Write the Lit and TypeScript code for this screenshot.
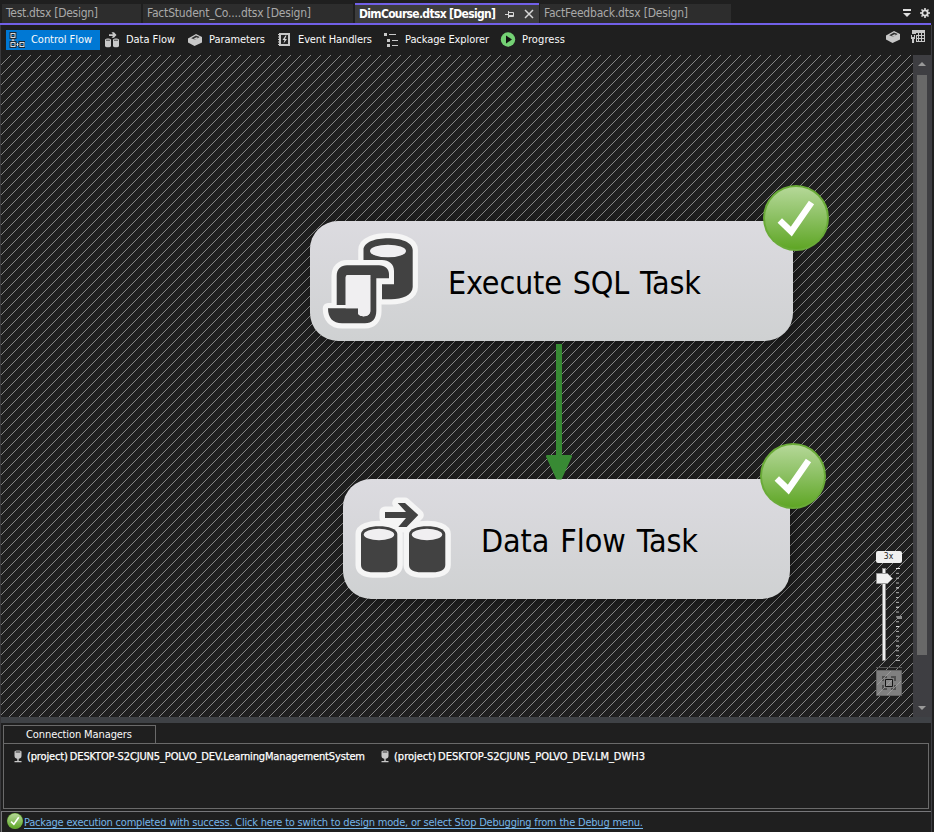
import { LitElement, html, css, svg } from "lit";
import { customElement, property, query } from "lit/decorators.js";

/** One line of text whose tracking is adjusted so that it spans a set width. */
@customElement("fit-text")
class FitText extends LitElement {
  @property({ type: Number }) width = 0;
  @property() text = "";
  @query("span") span!: HTMLSpanElement;

  static styles = css`
    :host { display: inline-block; white-space: pre; flex: none; }
  `;

  protected updated() {
    this.span.style.letterSpacing = "0px";
    const natural = this.span.getBoundingClientRect().width;
    const spacing = (this.width - natural) / Math.max(1, this.text.length - 1);
    this.span.style.letterSpacing = `${spacing}px`;
    this.style.width = `${this.width}px`;
  }

  render() {
    return html`<span>${this.text}</span>`;
  }
}

const box = svg`<path d="M1 6.500 9 2l6 3v5.500L7.500 14 1 10.500z" fill="#c8c8c8"/><path d="M4.200 6.300 8.900 3.500l3.800 1.600-4.500 2.600z" fill="#303030"/><path d="M6.400 6.900l2.900-1.700 2 .7-3 1.800z" fill="#c8c8c8"/>`;

const toolIcons: Record<string, unknown> = {
  control: svg`<g fill="none" stroke="#1c2a36" stroke-width="3"><rect x="2" y="1.500" width="4" height="4"/><rect x="2" y="10.500" width="4" height="4"/><rect x="11" y="10.500" width="4" height="4"/><path d="M4 6.500V9M7 12.500h3"/></g><g fill="none" stroke="#d6dde2"><rect x="2" y="1.500" width="4" height="4"/><rect x="2" y="10.500" width="4" height="4"/><rect x="11" y="10.500" width="4" height="4"/><path d="M4 7v2M2.500 8.200h3M7.500 12.500h2M8.500 11v3"/></g>`,
  data: svg`<g fill="#c8c8c8"><path d="M1 8c0-2 6-2 6 0v6c0 1.800-6 1.800-6 0z"/><path d="M9 8c0-2 6-2 6 0v6c0 1.800-6 1.800-6 0z"/><path d="M5 2.200h4L7.500.3H10L12.500 3 10 5.800H7.500L9 4H5z"/></g><path d="M2 8.200h4M10 8.200h4" stroke="#444"/>`,
  params: box,
  events: svg`<path d="M3 1h11v13H3z" fill="#c8c8c8"/><path d="M5 3h7v9H5z" fill="#252525"/><path d="M2 2.500h2M2 5h2M2 7.500h2M2 10h2M2 12.500h2" stroke="#c8c8c8"/><path d="M9.500 3.500 6.500 8h2l-1 3.500L11 7H9l1.500-3.500z" fill="#d8d8d8"/>`,
  explorer: svg`<g fill="#c8c8c8"><path d="M1 1h3v3H1zM4 7h3v3H4zM4 12h3v3H4zM6 2h7v1H6zM9 8h6v1H9zM9 13h6v1H9z"/></g>`,
  progress: svg`<circle cx="8" cy="7.500" r="7.200" fill="#74d174"/><path d="M6 3.500 12 7.500l-6 4z" fill="#111"/>`,
};

const tools = [
  { icon: "control", label: "Control Flow", width: 94, text: 61, active: true },
  { icon: "data", label: "Data Flow", width: 82, text: 49 },
  { icon: "params", label: "Parameters", width: 88, text: 56 },
  { icon: "events", label: "Event Handlers", width: 106, text: 74 },
  { icon: "explorer", label: "Package Explorer", width: 116, text: 84 },
  { icon: "progress", label: "Progress", width: 80, text: 43 },
];

const badge = html`<svg class="badge" viewBox="0 0 66 66">
  <defs><linearGradient id="g" x2="0" y2="1"><stop offset="0" stop-color="#b5d898"/><stop offset=".45" stop-color="#8fc267"/><stop offset="1" stop-color="#5fa625"/></linearGradient></defs>
  <circle cx="33" cy="33" r="33" fill="#6aab38"/><circle cx="33" cy="33" r="31" fill="url(#g)"/>
  <path d="M16.800 35.500 28.300 46.500 48.500 17.500" fill="none" stroke="#fff" stroke-width="6.400"/>
</svg>`;

const sqlShape = "M41.500 27V17C41.500 9 54 5.300 66 5.300S90.700 9 90.700 17V54C90.700 62 80 66.300 69 66.300H60V51.300H72V38C72 31 67 27 60 27Z";
const scrollShape = "M14.700 72V43C14.700 36 19 32.300 25 32.300H57C63 32.300 67 36 67 41V45.300H54.300V78C54.300 86 50 90.300 43 90.300H20C11 90.300 6 85 6 75.300H14.700Z";
const sqlIcon = html`<svg class="art" viewBox="0 0 96 96">
  <g fill="#f5f5f5" stroke="#f5f5f5" stroke-width="10.500" stroke-linejoin="round"><path d=${sqlShape}/><path d=${scrollShape}/></g>
  <path d=${sqlShape} fill="#424242"/><ellipse cx="66" cy="18" rx="18" ry="6.300" fill="#f0eff1"/>
  <path d="M6 75.300H36V80C36 84.500 48.300 84.500 48.300 78V45H54.300V78C54.300 86 50 90.300 43 90.300H20C11 90.300 6 85 6 75.300Z" fill="#424242"/>
  <path d="M14.700 72V43C14.700 36 19 32.300 25 32.300H57C63 32.300 67 36 67 41V45.300H48.300V42H26C24 42 23.700 43 23.700 45V72Z" fill="#424242"/>
  <path d="M23.700 45C23.700 43 24.500 42 26 42H48.300V78C48.300 85 36 85 36 79V75.300H23.700Z" fill="#f0eff1"/>
</svg>`;

const cylL = "M6 39C6 28.500 42.300 28.500 42.300 39V70C42.300 75 37 77.300 30 77.300H18C11 77.300 6 75 6 70Z";
const cylR = "M54 39C54 28.500 90.300 28.500 90.300 39V70C90.300 75 85 77.300 78 77.300H66C59 77.300 54 75 54 70Z";
const arrowShape = "M30 17H51L42.700 8H50L63.300 20 51.700 32H43.300L51 23H30Z";
const dataIcon = html`<svg class="art" viewBox="0 0 96 96">
  <g fill="#f5f5f5" stroke="#f5f5f5" stroke-width="11" stroke-linejoin="round"><path d=${cylL}/><path d=${cylR}/><path d=${arrowShape}/></g>
  <g fill="#424242"><path d=${cylL}/><path d=${cylR}/><path d=${arrowShape}/></g>
  <g fill="#f0eff1"><ellipse cx="24" cy="39.500" rx="15.200" ry="5.700"/><ellipse cx="72" cy="39.500" rx="15.200" ry="5.700"/></g>
</svg>`;

const plug = html`<svg class="plug" viewBox="0 0 8 13"><path d="M.5 1.500C.5 0 7.500 0 7.500 1.500V6C7.500 8 6 8.500 4.700 8.700V11H7.500v1.200H.5V11h2.800V8.700C2 8.500.5 8 .5 6z" fill="#c8c8c8"/><path d="M1.700 2h4.600" stroke="#333"/></svg>`;

const diagonal = Array.from({ length: 10 }, (_, i) => `M${(15 - i) % 10} ${i}h1v1h-1z`).join("");
const ticks = Array.from({ length: 20 }, (_, i) => i);

@customElement("app-root")
class AppRoot extends LitElement {
  static styles = css`
    :host {
      display: flex; flex-direction: column; box-sizing: border-box;
      width: 934px; height: 832px; overflow: hidden; position: relative;
      background: #1f1f1f; color: #fafafa;
      font: 11px/14px "DejaVu Sans Condensed", "DejaVu Sans", sans-serif;
      font-stretch: condensed;
    }
    svg { display: block; flex: none; }
    .tabs { display: flex; height: 23px; padding-left: 2px; align-items: flex-end; flex: none; font-size: 12px; border-bottom: 2px solid #7160e8; margin-right: 3px; box-sizing: content-box; }
    .tab { box-sizing: border-box; display: flex; align-items: center; height: 19px; padding: 0 0 1px 4px; background: #2d2d2d; color: #a9a9a9; margin-right: 2px; }
    .t1 { width: 139px; } .t2 { width: 210px; }
    .t3 { width: 184px; height: 20px; background: #3d3d3d; border-top: 2px solid #7160e8; color: #fff; font-weight: bold; margin-right: 1px; padding-bottom: 0; }
    .t4 { width: 191px; }
    .pin { margin-left: 9px; } .close { margin-left: 10px; }
    .tabtools { display: flex; gap: 9px; margin-left: auto; height: 20px; align-items: center; margin-right: 1px; }
    .body { flex: none; height: 807px; display: flex; flex-direction: column; border-left: 1px solid #38383b; border-right: 1px solid #3d3d42; margin-right: 2px; }
    .toolbar { display: flex; height: 30px; flex: none; padding-left: 5px; align-items: flex-start; box-sizing: border-box; padding-top: 5px; }
    .tool { display: flex; box-sizing: border-box; height: 20px; align-items: center; padding-left: 3px; gap: 6px; margin-right: 1px; }
    .tool svg { margin-top: -1px; }
    .active { background: #0078d4; }
    .side { display: flex; gap: 8px; margin-left: auto; margin-right: 6px; margin-top: -1px; }
    .stage { display: flex; height: 662px; flex: none; }
    .canvas { position: relative; width: 912px; height: 662px; overflow: hidden; }
    .hatch { position: absolute; inset: 0; }
    .node { position: absolute; box-sizing: border-box; height: 120px; border-radius: 28px; background: linear-gradient(#dcdbe0, #cfd1d2); color: #000; display: flex; align-items: center; gap: 30px; padding-left: 12px; font-size: 32px; line-height: 40px; word-spacing: 2px; box-shadow: 3px 2px 12px #0005; }
    .n1 { left: 309px; top: 166px; width: 483px; }
    .n2 { left: 342px; top: 424px; width: 447px; }
    .n2 .art { margin-top: 8px; }
    .node fit-text { margin-top: 3px; }
    .art { width: 96px; height: 96px; }
    .badge { position: absolute; right: -36px; top: -36px; width: 66px; height: 66px; }
    .arrow { position: absolute; left: 545px; top: 289px; }
    .zoom { position: absolute; left: 875px; top: 496px; width: 26px; display: flex; flex-direction: column; }
    .level { height: 12px; border-radius: 2px; background: #f0f0f0; color: #222; font-size: 8.5px; line-height: 11px; text-align: center; padding-right: 1px; box-sizing: border-box; }
    .scroll { width: 18px; background: #3e3e42; display: flex; flex-direction: column; align-items: center; box-sizing: border-box; padding-top: 7px; }
    .thumb { width: 10px; height: 580px; margin: 9px 0 51px; background: #686868; flex: none; }
    .splitter { height: 6px; background: #3f4246; flex: none; }
    .cm { margin: 2px 2px 0 2px; height: 84px; flex: none; }
    .cmtab { width: 153px; height: 18px; box-sizing: border-box; border: 1px solid #6a6a6a; border-bottom: 0; padding: 2px 0 0 22px; }
    .cmbody { height: 66px; box-sizing: border-box; border: 1px solid #6a6a6a; display: flex; padding: 6px 0 0 10px; align-items: flex-start; color: #fff; -webkit-text-stroke: .25px #fff; word-spacing: -1px; }
    .conn { display: flex; align-items: center; gap: 5px; margin-right: 16px; height: 13px; }
    .plug { width: 8px; height: 13px; }
    .status { margin-top: 2px; border-top: 1px solid #77777a; border-left: 1px solid #77777a; height: 20px; display: flex; align-items: center; padding-left: 5px; gap: 1px; color: #75b5e8; }
    .link { border-bottom: 1px solid #75b5e8; height: 12px; line-height: 14px; }
    .status .badge { position: static; width: 16px; height: 16px; margin-top: -2px; }
  `;

  render() {
    return html`
      <div class="tabs">
        <div class="tab t1"><fit-text width="92" text="Test.dtsx [Design]"></fit-text></div>
        <div class="tab t2"><fit-text width="164" text="FactStudent_Co....dtsx [Design]"></fit-text></div>
        <div class="tab t3"><fit-text width="137" text="DimCourse.dtsx [Design]"></fit-text>
          <svg class="pin" width="9" height="9" fill="none" stroke="#d6d6d6"><path d="M0 4.500h3M3.500 1v7M4 2.500h4.500v4H4M4 5.500h4.500"/></svg>
          <svg class="close" width="10" height="10" stroke="#d6d6d6" stroke-width="1.500"><path d="M1 1l8 8M9 1L1 9"/></svg>
        </div>
        <div class="tab t4"><fit-text width="144" text="FactFeedback.dtsx [Design]"></fit-text></div>
        <div class="tabtools">
          <svg width="8" height="8" fill="#dedede"><path d="M0 0h8v2H0zM0 4h8L4 8z"/></svg>
          <svg width="10" height="10" viewBox="0 0 10 10"><circle cx="5" cy="5" r="2.700" fill="none" stroke="#dedede" stroke-width="1.800"/><path d="M5 0v2M5 8v2M0 5h2M8 5h2M1.500 1.500l1.300 1.300M7.200 7.200l1.300 1.300M1.500 8.500l1.300-1.300M7.200 2.800l1.300-1.300" stroke="#dedede" stroke-width="1.600"/></svg>
        </div>
      </div>
      <div class="body">
        <div class="toolbar">
          ${tools.map(t => html`<div class="tool ${t.active ? "active" : ""}" style="width:${t.width}px">
            <svg width="16" height="16" viewBox="0 0 16 16">${toolIcons[t.icon]}</svg>
            <fit-text .width=${t.text} .text=${t.label}></fit-text></div>`)}
          <div class="side">
            <svg width="16" height="16" viewBox="0 0 16 16">${box}</svg>
            <svg width="16" height="16" viewBox="0 0 16 16" shape-rendering="crispEdges"><path d="M3 1h13v12H7V8H3z" fill="#c8c8c8"/><path d="M7 4h2v2H7zM10 4h2v2h-2zM13 4h2v2h-2zM8 7h1v2H8zM10 7h2v2h-2zM13 7h2v2h-2zM8 10h1v2H8zM10 10h2v2h-2zM13 10h2v2h-2z" fill="#252525"/><path d="M1 5h6v4H6v5H3V9H1z" fill="#252525"/><path d="M2 6h1v3H2zM5 6h1v3H5zM2 8h4v2H2zM3 10h2v4H3z" fill="#c8c8c8"/></svg>
          </div>
        </div>
        <div class="stage">
          <div class="canvas">
            <svg class="hatch" width="912" height="662" shape-rendering="crispEdges">
              <defs><pattern id="h" x="-1" y="-55" width="10" height="10" patternUnits="userSpaceOnUse"><path d=${diagonal} fill="#858585"/></pattern></defs>
              <rect width="912" height="662" fill="url(#h)"/>
            </svg>
            <div class="node n1">${sqlIcon}<fit-text width="253" text="Execute SQL Task"></fit-text>${badge}</div>
            <div class="node n2">${dataIcon}<fit-text width="217" text="Data Flow Task"></fit-text>${badge}</div>
            <svg class="arrow" width="26" height="136" fill="#388a34"><path d="M10 0h6v111h-6z"/><path d="M1.500 111h23c1.500 0 2 1.500 1 2.800L15.500 135.500h-5L.5 113.800c-1-1.300-.5-2.800 1-2.800z"/></svg>
            <div class="zoom">
              <div class="level">3x</div>
              <svg width="30" height="145" viewBox="0 0 30 145">
                <path d="M6 5h4v93H6z" fill="#8c8c8c"/><path d="M7 6h2v91H7z" fill="#f0f0f0"/>
                <path d="M.5 10.500h11l5 5-5 5H.5z" fill="#f0f0f0" stroke="#999"/>
                ${ticks.map(i => svg`<path d="M20 ${5.5 + i * 4.84}h${i % 19 ? 3 : 4}" stroke=${i % 4 ? "#b5b5b5" : "#f0f0f0"}/>`)}
                <path d="M21 53h5v3h-5z" fill="#8c8c8c"/>
                <path d="M0 104.500h26" stroke="#555"/>
                <path d="M.5 107.500h25v25H.5z" fill="#808080" stroke="#666"/>
                <path d="M7 118v-4h4M15 114h4v4M19 122v4h-4M11 126H7v-4" fill="none" stroke="#505050" stroke-width="2"/>
                <path d="M9.500 116.500h7v7h-7z" fill="#888" stroke="#151515"/>
                <path d="M10 123l6-6M1 122l14-14M1 132l8-8M11 132l14-14" stroke="#a5a5a5" stroke-width=".7"/>
              </svg>
            </div>
          </div>
          <div class="scroll">
            <svg width="8" height="4" fill="#999"><path d="M0 4l4-4 4 4z"/></svg>
            <div class="thumb"></div>
            <svg width="8" height="4" fill="#999"><path d="M0 0l4 4 4-4z"/></svg>
          </div>
        </div>
        <div class="splitter"></div>
        <div class="cm">
          <div class="cmtab"><fit-text width="106" text="Connection Managers"></fit-text></div>
          <div class="cmbody">
            <div class="conn">${plug}<fit-text width="338" text="(project) DESKTOP-S2CJUN5_POLVO_DEV.LearningManagementSystem"></fit-text></div>
            <div class="conn">${plug}<fit-text width="251" text="(project) DESKTOP-S2CJUN5_POLVO_DEV.LM_DWH3"></fit-text></div>
          </div>
        </div>
        <div class="status">${badge}<fit-text class="link" width="619" text="Package execution completed with success. Click here to switch to design mode, or select Stop Debugging from the Debug menu."></fit-text></div>
      </div>
    `;
  }
}
